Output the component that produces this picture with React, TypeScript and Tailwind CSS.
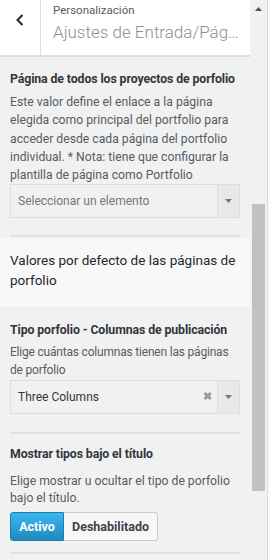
import React from "react";

const font = { fontFamily: 'Roboto, "Noto Sans", sans-serif' };

function Select({ value, clearable }: { value: string; clearable?: boolean }) {
  return (
    <div className="flex h-[34px] w-[230px] border border-[#dddddd] bg-[#f1f1f1]">
      <div className={"flex flex-1 items-center pl-[7px] text-[12px] " + (clearable ? "text-[#32373c]" : "text-[#72777c]")}>
        {value}
      </div>
      {clearable && (
        <div className="flex w-[14px] items-center text-[11px] font-bold text-[#999999]">✖</div>
      )}
      <div className="flex w-[22px] items-center justify-center border-l border-[#dddddd] bg-[#e8e8e8]">
        <svg width="7" height="4" viewBox="0 0 7 4"><path d="M0 0h7L3.5 4z" fill="#777" /></svg>
      </div>
    </div>
  );
}

export default function App() {
  return (
    <div className="flex h-[560px] w-[270px] overflow-hidden bg-[#f1f1f1]" style={font}>
      <div className="flex w-[250px] flex-col">
        {/* header */}
        <div className="flex h-[57px] shrink-0 border-b-2 border-[#dddddd] bg-white">
          <div className="flex w-[41px] items-start justify-center border-r border-[#dddddd] pt-[13px]">
            <svg width="10" height="14" viewBox="0 0 10 14"><path d="M7.5 2L2.5 7l5 5" stroke="#23282d" strokeWidth="2" fill="none" /></svg>
          </div>
          <div className="flex min-w-0 flex-1 flex-col pl-[12px] pr-[10px]">
            <div className="mt-[1px] text-[11.5px] leading-[18px] text-[#555d66]">Personalización</div>
            <div className="truncate text-[17px] font-light leading-[26px] text-[#8b9095]">Ajustes de Entrada/Página</div>
          </div>
        </div>

        <div className="px-[10px] pt-[13px]">
          <div className="whitespace-nowrap text-[12.3px] font-bold leading-[18px] tracking-[-0.1px] text-[#32373c]">Página de todos los proyectos de porfolio</div>
          <div className="mt-[5px] text-[12.2px] leading-[18.3px] text-[#555d66]">
            Este valor define el enlace a la página elegida como principal del portfolio para acceder desde cada página del portfolio individual. * Nota: tiene que configurar la plantilla de página como Portfolio
          </div>
          <Select value="Seleccionar un elemento" />
          <div className="mt-[17px] h-[2px] w-[230px] bg-[#e2e2e2]" />
        </div>

        <div className="mt-[1px] bg-[#f8f8f8] px-[10px] pb-[17px] pt-[12px]">
          <div className="text-[13.5px] leading-[20px] text-[#23282d]">Valores por defecto de las páginas de porfolio</div>
        </div>

        <div className="px-[10px] pt-[14px]">
          <div className="whitespace-nowrap text-[12.3px] font-bold leading-[18px] tracking-[-0.1px] text-[#32373c]">Tipo porfolio - Columnas de publicación</div>
          <div className="mt-[5px] text-[12px] leading-[17.5px] tracking-[-0.2px] text-[#555d66]">
            <span className="whitespace-nowrap">Elige cuántas columnas tienen las páginas</span> de porfolio
          </div>
          <div className="mt-[1px]">
            <Select value="Three Columns" clearable />
          </div>
          <div className="mt-[18px] h-[2px] w-[230px] bg-[#e2e2e2]" />
          <div className="mt-[11px] text-[12.3px] font-bold leading-[18px] tracking-[-0.1px] text-[#32373c]">Mostrar tipos bajo el título</div>
          <div className="mt-[10px] text-[12.2px] leading-[16.5px] text-[#555d66]">Elige mostrar u ocultar el tipo de porfolio bajo el título.</div>
          <div className="mt-[6px] flex h-[29px]">
            <div className="flex w-[54px] items-center justify-center rounded-l-[3px] border border-[#1a7fb0] bg-gradient-to-b from-[#3ab8ef] to-[#2089bd] text-[12.5px] font-bold text-white">Activo</div>
            <div className="flex w-[94px] items-center justify-center rounded-r-[3px] border border-l-0 border-[#cccccc] bg-[#f7f7f7] text-[12.5px] font-bold text-[#3c434a]">Deshabilitado</div>
          </div>
          <div className="mt-[11px] h-[2px] w-[230px] bg-[#e2e2e2]" />
        </div>
      </div>

      {/* scrollbar */}
      <div className="flex w-[17px] flex-col items-center bg-[#f1f1f1]">
        <svg className="mt-[7px]" width="7" height="4" viewBox="0 0 7 4"><path d="M0 4h7L3.5 0z" fill="#505050" /></svg>
        <div className="mt-[193px] h-[287px] w-[13px] bg-[#c1c1c1]" />
      </div>
      <div className="w-px bg-[#dcdcdc]" />
      <div className="flex-1 bg-[#fafafa]" />
    </div>
  );
}
